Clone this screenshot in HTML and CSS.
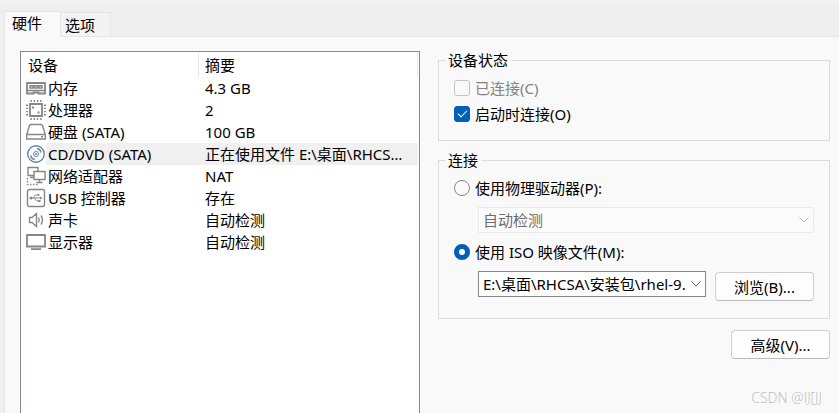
FILE: index.html
```
<!DOCTYPE html>
<html lang="zh-CN">
    <head>
        <meta charset="utf-8">
        <title>虚拟机设置</title>
        <link rel="stylesheet" href="styles.css">
    </head>
    <body>
        <div class="tabs" role="tablist">
            <button class="tab active" role="tab" aria-selected="true">硬件</button>
            <button class="tab" role="tab" aria-selected="false">选项</button>
        </div>
        <main class="panel">
            <div class="devices">
                <table>
                    <thead>
                        <tr><th class="name">设备</th><th>摘要</th></tr>
                    </thead>
                    <tbody>
                        <tr>
                            <td><div class="device">
                                <svg class="icon" viewBox="0 0 20 20"><path class="thick" d="M1 5h18v10.500h-6.500v-1h-5v1H1z"/><path d="M1 12.500h18M4 7.700h3v2.300H4zM8.500 7.700h3v2.300h-3zM13 7.700h3v2.300h-3z"/></svg>
                                <span>内存</span>
                            </div></td>
                            <td>4.3 GB</td>
                        </tr>
                        <tr>
                            <td><div class="device">
                                <svg class="icon" viewBox="0 0 20 20"><path class="thick" d="M4 4h12v12H4z"/><path class="pins" d="M4.500 1h11M4.500 19h11M1 4.500v11M19 4.500v11"/><path class="dot" d="M6 6.500h2v2H6zM11.500 11.500h2v2h-2z"/></svg>
                                <span>处理器</span>
                            </div></td>
                            <td>2</td>
                        </tr>
                        <tr>
                            <td><div class="device">
                                <svg class="icon" viewBox="0 0 20 20"><path d="M.7 12.500 3.500 3.500Q3.800 2.500 5 2.500h10q1.200 0 1.500 1l2.800 9v4.500H.7zM.7 12.500h18.600"/><path d="M15 14.800h2"/></svg>
                                <span>硬盘 (SATA)</span>
                            </div></td>
                            <td>100 GB</td>
                        </tr>
                        <tr class="selected">
                            <td><div class="device">
                                <svg class="icon disc" viewBox="0 0 20 20"><circle cx="10" cy="10" r="8.300"/><circle cx="10" cy="10" r="2.500" stroke-width="1"/><circle class="dot" cx="10" cy="10" r="1"/><path d="M11 4.500a5 5 0 0 1 4 4M4.800 11.500a5 5 0 0 0 4 4"/></svg>
                                <span>CD/DVD (SATA)</span>
                            </div></td>
                            <td>正在使用文件 E:\桌面\RHCSA\安装包\rhel-9.4.iso</td>
                        </tr>
                        <tr>
                            <td><div class="device">
                                <svg class="icon" viewBox="0 0 20 20"><path d="M7.500 9.500H2v-8h10V5M4 11.500h4M8 5.500h11v8H8zM13.500 13.500v2.500M10.500 16.500h6"/><path stroke-dasharray="1.500 1.500" d="M1.500 12v6.500h11"/></svg>
                                <span>网络适配器</span>
                            </div></td>
                            <td>NAT</td>
                        </tr>
                        <tr>
                            <td><div class="device">
                                <svg class="icon" viewBox="0 0 20 20"><rect x="1.500" y="1.500" width="17" height="17" rx="2"/><path stroke-width="1" d="M5 10h10M7 10l2.500-3H12M8.500 10l2.500 3h2"/><circle class="dot" cx="5" cy="10" r="1.500"/><circle class="dot" cx="12.500" cy="7" r="1"/><path class="dot" d="M14 8.500l2.500 1.500-2.500 1.500zM12.500 12h2v2h-2z"/></svg>
                                <span>USB 控制器</span>
                            </div></td>
                            <td>存在</td>
                        </tr>
                        <tr>
                            <td><div class="device">
                                <svg class="icon" viewBox="0 0 20 20"><path d="M3.500 7.500H6l4.500-4v13l-4.500-4H3.500zM12.500 7.500q1.500 2.500 0 5M15 5.500q3 4.500 0 9"/></svg>
                                <span>声卡</span>
                            </div></td>
                            <td>自动检测</td>
                        </tr>
                        <tr>
                            <td><div class="device">
                                <svg class="icon" viewBox="0 0 20 20"><path class="thick" d="M1 3h18v11.500H1zM5 17.200h10"/></svg>
                                <span>显示器</span>
                            </div></td>
                            <td>自动检测</td>
                        </tr>
                    </tbody>
                </table>
            </div>
            <div class="settings">
                <fieldset>
                    <legend>设备状态</legend>
                    <label class="option disabled"><input type="checkbox" disabled>已连接(C)</label>
                    <label class="option"><input type="checkbox" checked>启动时连接(O)</label>
                </fieldset>
                <fieldset class="connection">
                    <legend>连接</legend>
                    <label class="option"><input type="radio" name="source">使用物理驱动器(P):</label>
                    <div class="row">
                        <div class="combo">
                            <select aria-label="物理驱动器" disabled><option>自动检测</option></select>
                            <svg class="chevron" viewBox="0 0 10 6"><path d="M.5.5 5 5 9.500.5"/></svg>
                        </div>
                    </div>
                    <label class="option"><input type="radio" name="source" checked>使用 ISO 映像文件(M):</label>
                    <div class="row">
                        <div class="combo">
                            <select aria-label="ISO 映像文件"><option>E:\桌面\RHCSA\安装包\rhel-9.4.iso</option></select>
                            <svg class="chevron" viewBox="0 0 10 6"><path d="M.5.5 5 5 9.500.5"/></svg>
                        </div>
                        <button class="push">浏览(B)...</button>
                    </div>
                </fieldset>
                <button class="push advanced">高级(V)...</button>
            </div>
        </main>
        <div class="watermark">CSDN @IJ[JJ</div>
    </body>
</html>
```
FILE: styles.css
```
*{
    box-sizing: border-box;
}
body{
    margin: 0;
    min-height: 100vh;
    display: flex;
    flex-direction: column;
    background-color: #efefef;
    border-top: 2px solid #f3f3f3;
    color: black;
    font-family: "Noto Sans", "Noto Sans CJK SC", sans-serif;
    font-size: 15px;
    line-height: 20px;
}
button, select{
    font: inherit;
    color: inherit;
}
.tabs{
    display: flex;
    align-items: flex-end;
    position: relative;
    padding: 9px 0 0 4px;
}
.tab{
    height: 24px;
    padding: 0 15px 0 4px;
    background-color: #f3f3f3;
    border: 1px solid #e5e5e5;
    border-left: none;
    border-bottom: none;
}
.tab.active{
    height: 26px;
    margin-bottom: -1px;
    padding: 0 18px 4px 7px;
    background-color: #f9f9f9;
    border-left: 1px solid #e5e5e5;
}
.panel{
    flex: 1;
    display: grid;
    grid-template-columns: 400fr 392fr;
    gap: 18px;
    padding: 13px 9px 0 15px;
    margin-left: 4px;
    background-color: #f9f9f9;
    border-left: 1px solid #e5e5e5;
    border-top: 1px solid #e5e5e5;
}
.devices{
    min-width: 0;
    margin-top: 1px;
    padding: 1px 1px 0 0;
    background-color: white;
    border: 1px solid #828790;
    border-bottom: none;
}
table{
    width: 100%;
    table-layout: fixed;
    border-collapse: separate;
    border-spacing: 0;
}
th{
    height: 24px;
    padding: 0 6px;
    border-right: 1px solid #e5e5e5;
    font-weight: normal;
    text-align: left;
}
th.name{
    width: 178px;
    padding-left: 7px;
}
td{
    height: 22px;
    padding: 0 10px 0 6px;
    overflow: hidden;
    white-space: nowrap;
    text-overflow: ellipsis;
}
td:first-child{
    padding: 0 0 0 5px;
}
.device{
    display: flex;
    align-items: center;
}
.device span{
    flex: 1;
    height: 22px;
    padding-left: 2px;
    line-height: 22px;
}
.selected span, .selected td:last-child{
    background-color: #f0f0f0;
}
.icon{
    width: 20px;
    height: 20px;
    fill: none;
    stroke: #868686;
    stroke-width: 1.4;
}
.thick{
    stroke-width: 1.8;
}
.pins{
    stroke-width: 2;
    stroke-dasharray: 1.4 1.8;
}
.disc{
    stroke: #6186a5;
}
.dot{
    fill: #868686;
    stroke: none;
}
.disc .dot{
    fill: #6186a5;
}
.settings{
    min-width: 0;
    display: flex;
    flex-direction: column;
}
fieldset{
    min-width: 0;
    margin: 0 0 9px;
    padding: 8px 15px 16px;
    border: 1px solid #dcdcdc;
}
legend{
    margin-left: -9px;
    padding: 0 3px;
}
.connection{
    margin-bottom: 11px;
}
.option{
    display: flex;
    align-items: center;
    gap: 5px;
}
.option + .option{
    margin-top: 6px;
}
.disabled{
    color: #838383;
}
input{
    appearance: none;
    width: 16px;
    height: 16px;
    margin: 0;
    background-color: #f9f9f9;
    border: 1px solid #868686;
}
input[type=checkbox]{
    border-radius: 3px;
}
input[type=checkbox]:disabled{
    border-color: #c5c5c5;
}
input[type=checkbox]:checked{
    display: grid;
    place-items: center;
    background-color: #005fb8;
    border-color: #005fb8;
}
input[type=checkbox]:checked::before{
    content: "";
    width: 8px;
    height: 4px;
    margin-bottom: 3px;
    border-left: 1px solid white;
    border-bottom: 1px solid white;
    transform: rotate(-45deg);
}
input[type=radio]{
    border-radius: 50%;
}
input[type=radio]:checked{
    background-color: white;
    border: 5px solid #005fb8;
}
.row{
    display: flex;
    align-items: flex-start;
    gap: 9px;
    margin: 9px 0 9px 24px;
}
.row:last-child{
    margin-bottom: 1px;
}
.combo{
    position: relative;
    flex: 1;
    min-width: 0;
}
select{
    display: block;
    appearance: none;
    width: 100%;
    height: 26px;
    padding: 0 20px 0 4px;
    background-color: white;
    border: 1px solid #868686;
    border-radius: 0;
}
select:disabled{
    background-color: #fbfbfb;
    border-color: #eaeaea;
    color: #6d6d6d;
    opacity: 1;
}
.chevron{
    position: absolute;
    right: 5px;
    top: 10px;
    width: 10px;
    height: 6px;
    fill: none;
    stroke: #5d5d5d;
    pointer-events: none;
}
select:disabled + .chevron{
    stroke: #b5b5b5;
}
.push{
    min-width: 99px;
    height: 29px;
    padding: 0 12px;
    background-color: #fdfdfd;
    border: 1px solid #d0d0d0;
    border-bottom-color: #bababa;
    border-radius: 4px;
}
.row .push{
    margin-top: 1px;
}
.advanced{
    align-self: flex-end;
}
.watermark{
    position: absolute;
    right: 17px;
    bottom: 5px;
    color: #bcbcbc;
    font-family: "Open Sans", sans-serif;
    font-size: 14px;
    font-weight: 300;
}
```
